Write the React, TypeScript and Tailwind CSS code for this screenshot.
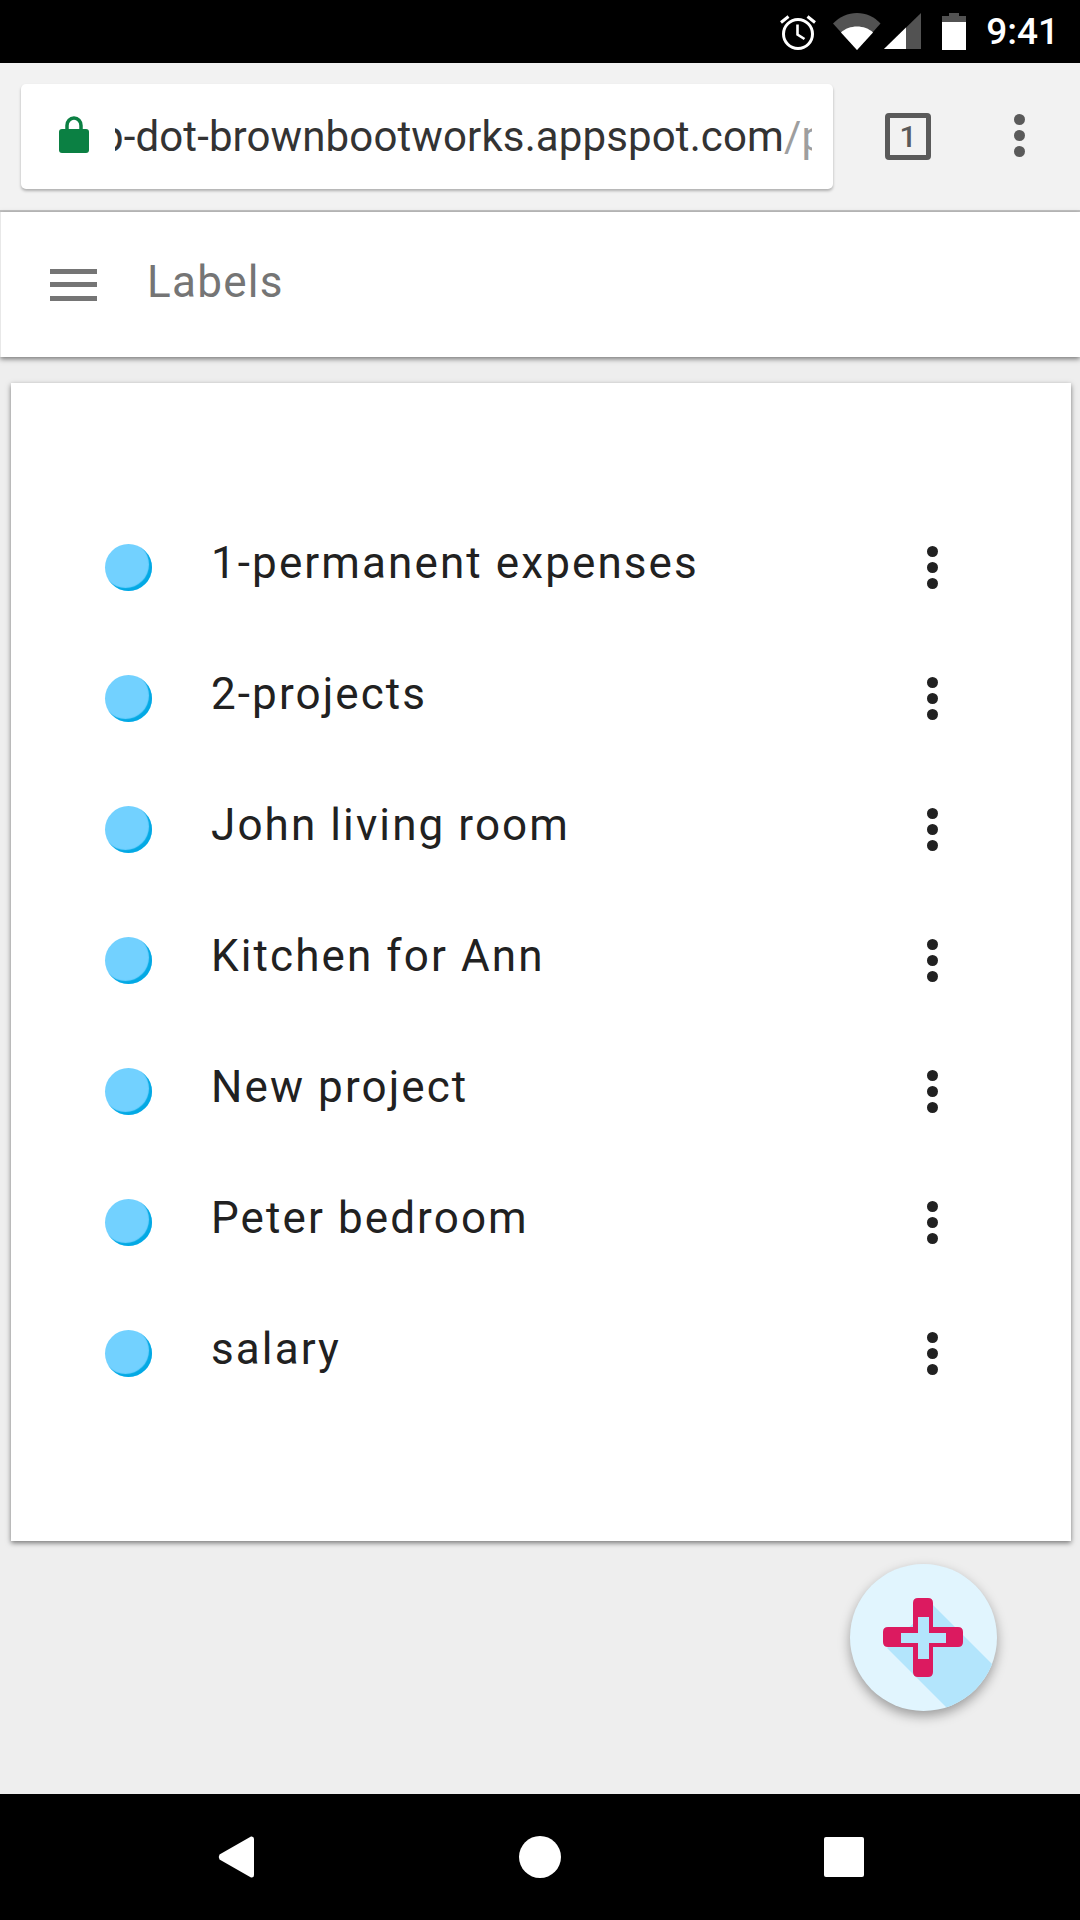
import React from "react";

const labels = [
  "1-permanent expenses",
  "2-projects",
  "John living room",
  "Kitchen for Ann",
  "New project",
  "Peter bedroom",
  "salary",
];

function Dots({ color, gap }: { color: string; gap: string }) {
  return (
    <div className={`flex flex-col ${gap}`}>
      <span className={`block w-[11px] h-[11px] rounded-full ${color}`} />
      <span className={`block w-[11px] h-[11px] rounded-full ${color}`} />
      <span className={`block w-[11px] h-[11px] rounded-full ${color}`} />
    </div>
  );
}

function StatusBar() {
  return (
    <div className="h-[63px] bg-black flex items-center justify-end pr-[21px] shrink-0">
      <svg width="38" height="38" viewBox="0 0 38 38" className="mr-[16px] mt-[1px]">
        <circle cx="19" cy="21" r="14.5" fill="none" stroke="#fff" strokeWidth="3" />
        <path d="M18.5 11.5V21.5L25.5 26" fill="none" stroke="#fff" strokeWidth="2.6" />
        <path d="M2 9.5L9.5 3.5M36 9.5L28.5 3.5" fill="none" stroke="#fff" strokeWidth="3" />
      </svg>
      <svg width="48" height="37" viewBox="0 0 48 37" className="mr-[3px]">
        <path d="M0 10.5C6.5 4 15 0 24 0C33 0 41.5 4 47.500 10.500L24 37Z" fill="#525252" />
        <path d="M8 19.500C12 15.500 18 13.500 24 13.500C30 13.500 36 15.500 40 19.500L24 37Z" fill="#fff" />
      </svg>
      <svg width="37" height="37" viewBox="0 0 37 37" className="mr-[21px]">
        <path d="M0 36L37 0V36Z" fill="#525252" />
        <path d="M0 36L22 14.500V36Z" fill="#fff" />
      </svg>
      <svg width="24" height="37" viewBox="0 0 24 37" className="mr-[20px]">
        <path d="M7 0H17V3H24V37H0V3H7Z" fill="#fff" />
        <path d="M7 0H17V3H24V9H0V3H7Z" fill="#525252" />
      </svg>
      <span className="text-white text-[37px] font-medium leading-none font-['Roboto',sans-serif]">9:41</span>
    </div>
  );
}

function BrowserBar() {
  return (
    <div className="h-[149px] bg-[#f2f2f2] border-b-2 border-[#c4c4c4] flex items-start pt-[21px] pl-[21px] shrink-0">
      <div className="w-[812px] h-[105px] bg-white rounded-[5px] shadow-[0_2px_3px_rgba(0,0,0,0.28)] flex items-center pl-[38px]">
        <svg width="30" height="37" viewBox="0 0 30 37" className="shrink-0 mb-[4px]">
          <path d="M8 15V9.500C8 5.500 11 2 15 2C19 2 22 5.500 22 9.500V15" fill="none" stroke="#0b8043" strokeWidth="3.500" />
          <rect x="0" y="13" width="30" height="24" rx="3" fill="#0b8043" />
        </svg>
        <div className="ml-[26px] w-[697px] overflow-hidden">
          <div className="ml-[-15px] whitespace-nowrap text-[42px] leading-[48px] tracking-[0.12px] text-[#333333] font-['Roboto',sans-serif]">
            p-dot-brownbootworks.appspot.com<span className="text-[#9e9e9e]">/p</span>
          </div>
        </div>
      </div>
      <div className="ml-[52px] mt-[29px] w-[46px] h-[47px] border-[5px] border-[#5a5a5a] rounded-[4px] flex items-center justify-center">
        <span className="text-[30px] font-medium leading-none text-[#5a5a5a] font-['Roboto',sans-serif]">1</span>
      </div>
      <div className="ml-[83px] mt-[30px]">
        <Dots color="bg-[#5a5a5a]" gap="gap-[5px]" />
      </div>
    </div>
  );
}

function AppHeader() {
  return (
    <div className="h-[145px] bg-white shadow-[0_2px_5px_rgba(0,0,0,0.5)] border-l border-[#e8e8e8] flex items-center pl-[49px] shrink-0 relative">
      <div className="flex flex-col gap-[8.5px] w-[47px]">
        <span className="block h-[5px] bg-[#757575]" />
        <span className="block h-[5px] bg-[#757575]" />
        <span className="block h-[5px] bg-[#757575]" />
      </div>
      <span className="ml-[50px] mt-[-5px] text-[44px] leading-none text-[#757575] font-['Roboto',sans-serif] tracking-[1.3px]">Labels</span>
    </div>
  );
}

function Row({ text }: { text: string }) {
  return (
    <div className="h-[131px] flex items-center pl-[94px]">
      <span className="block w-[47px] h-[47px] rounded-full bg-[#72d1ff] shadow-[inset_-3px_-3px_1px_#03a9e4] shrink-0" />
      <span className="ml-[59px] flex-1 text-[44px] leading-none text-[#212121] tracking-[2.1px] mt-[-10px] font-['Roboto',sans-serif]">
        {text}
      </span>
      <div className="mr-[133px]">
        <Dots color="bg-[#212121]" gap="gap-[5px]" />
      </div>
    </div>
  );
}

function Fab() {
  return (
    <div className="absolute right-[83px] bottom-[209px] w-[147px] h-[147px] rounded-full bg-[#e1f5fe] shadow-[0_5px_12px_rgba(0,0,0,0.35)] overflow-hidden">
      <svg width="147" height="147" viewBox="0 0 147 147" className="block">
        <path d="M83 41L147 105V147H100L37 84Z" fill="#b3e5fc" />
        <path
          d="M68 34H78Q83 34 83 39V63H108Q113 63 113 68V78Q113 83 108 83H83V108Q83 113 78 113H68Q63 113 63 108V83H38Q33 83 33 78V68Q33 63 38 63H63V39Q63 34 68 34Z"
          fill="#dc1a60"
        />
        <path d="M68 53H79V69H96V79H79V95H68V79H51V69H68Z" fill="#b3e5fc" />
      </svg>
    </div>
  );
}

function NavBar() {
  return (
    <div className="h-[126px] bg-black flex items-start pt-[42px] pl-[218px] shrink-0">
      <svg width="36" height="42" viewBox="0 0 36 42">
        <path d="M33 0.500Q36 0 36 3V39Q36 42 33 41.500L1.500 23.500Q0 21 1.500 18.500Z" fill="#fff" />
      </svg>
      <span className="block ml-[265px] w-[42px] h-[42px] rounded-full bg-white" />
      <span className="block ml-[263px] w-[40px] h-[40px] rounded-[2px] bg-white mt-[1px]" />
    </div>
  );
}

export default function App() {
  return (
    <div className="w-[1080px] h-[1920px] flex flex-col bg-[#eeeeee] relative overflow-hidden">
      <StatusBar />
      <BrowserBar />
      <AppHeader />
      <main className="flex-1 px-[9px] pl-[11px] pt-[26px]">
        <div className="w-[1060px] h-[1158px] bg-white pt-[119px] shadow-[0_2px_5px_rgba(0,0,0,0.5)]">
          {labels.map((l) => (
            <Row key={l} text={l} />
          ))}
        </div>
      </main>
      <NavBar />
      <Fab />
    </div>
  );
}
